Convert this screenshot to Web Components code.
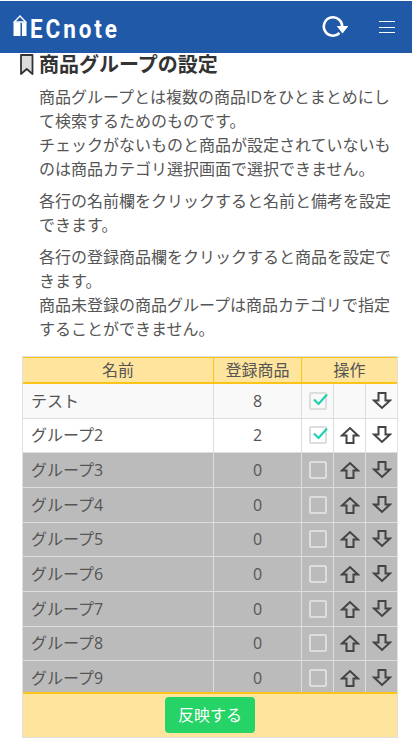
<!DOCTYPE html>
<html lang="ja">
<head>
<meta charset="utf-8">
<title>商品グループの設定</title>
<style>
  html, body { margin: 0; height: 738px; overflow: hidden; background: #fff; }
  body { font-family: "Open Sans", "Noto Sans CJK JP", sans-serif; color: #444; }
</style>
</head>
<body>
<ec-header></ec-header>
<ec-title>商品グループの設定</ec-title>
<ec-intro>
  <p>商品グループとは複数の商品IDをひとまとめにして検索するためのものです。<br>チェックがないものと商品が設定されていないものは商品カテゴリ選択画面で選択できません。</p>
  <p>各行の名前欄をクリックすると名前と備考を設定できます。</p>
  <p>各行の登録商品欄をクリックすると商品を設定できます。<br>商品未登録の商品グループは商品カテゴリで指定することができません。</p>
</ec-intro>
<ec-group-table>
  <ec-group-row name="テスト" count="8" checked first alt></ec-group-row>
  <ec-group-row name="グループ2" count="2" checked></ec-group-row>
  <ec-group-row name="グループ3" count="0" off></ec-group-row>
  <ec-group-row name="グループ4" count="0" off></ec-group-row>
  <ec-group-row name="グループ5" count="0" off></ec-group-row>
  <ec-group-row name="グループ6" count="0" off></ec-group-row>
  <ec-group-row name="グループ7" count="0" off></ec-group-row>
  <ec-group-row name="グループ8" count="0" off></ec-group-row>
  <ec-group-row name="グループ9" count="0" off></ec-group-row>
</ec-group-table>
<script>
// page header with logo, reload and menu
class EcHeader extends HTMLElement {
  constructor() {
    super();
    this.attachShadow({ mode: "open" }).innerHTML = `
      <style>
        :host{display:flex;align-items:center;height:52px;margin-top:1px;background:#2059a8;color:#fff;box-sizing:border-box;padding:0 17px 0 13px;}
        .pencil{width:14px;height:23px;margin-top:-1px;}
        .logo{font:700 25px/1 "Roboto",sans-serif;letter-spacing:3.200px;margin:4px 0 0 3px;transform:scaleX(.9);transform-origin:left center;}
        .gap{flex:1;}
        .reload{width:26px;height:26px;margin-right:31px;margin-top:-2px;}
        .menu{width:16px;height:12px;display:flex;flex-direction:column;justify-content:space-between;}
        .menu i{display:block;height:1px;background:#fff;}
      </style>
      <svg class="pencil" viewBox="0 0 14 23"><path d="M7 1 12.800 7H1.200Z" fill="none" stroke="#fff" stroke-width="1.400"/><path d="M.5 7.500H7.500V21H.5ZM9 7.500H13.500V21H9Z" fill="#fff"/></svg>
      <div class="logo">ECnote</div>
      <div class="gap"></div>
      <svg class="reload" viewBox="0 0 26 26"><path d="M20.200 14A9.200 9.200 0 1 0 17.500 20" fill="none" stroke="#fff" stroke-width="2.600"/><path d="M14.700 13H26.300L20.500 20.500Z" fill="#fff"/></svg>
      <div class="menu"><i></i><i></i><i></i></div>`;
  }
}
customElements.define("ec-header", EcHeader);

// section heading with bookmark
class EcTitle extends HTMLElement {
  constructor() {
    super();
    this.attachShadow({ mode: "open" }).innerHTML = `
      <style>
        :host{display:flex;align-items:center;gap:4px;height:24px;padding-left:20px;font-size:20px;font-weight:700;color:#333;line-height:24px;}
        svg{width:15px;height:22px;flex:none;}
      </style>
      <svg viewBox="0 0 15 22"><path d="M1 1h11.500v19l-5.750-5-5.750 5Z" fill="#dcdcdc" stroke="#333" stroke-width="1.800" stroke-linejoin="round"/></svg>
      <slot></slot>`;
  }
}
customElements.define("ec-title", EcTitle);

// explanatory paragraphs
class EcIntro extends HTMLElement {
  constructor() {
    super();
    this.attachShadow({ mode: "open" }).innerHTML = `
      <style>
        :host{display:block;padding:8px 20px 0 39px;font-size:16px;line-height:24px;color:#555;height:279px;box-sizing:border-box;}
        ::slotted(p){margin:0 0 8px;}
      </style>
      <slot></slot>`;
  }
}
customElements.define("ec-intro", EcIntro);

// table shell: head, rows, footer with the submit button
class EcGroupTable extends HTMLElement {
  constructor() {
    super();
    this.attachShadow({ mode: "open" }).innerHTML = `
      <style>
        :host{display:block;margin-left:22px;width:376px;box-sizing:border-box;border:1px solid #e0e0e0;font-size:16px;color:#555;}
        .head{display:grid;grid-template-columns:190px 1px 87px 1px 95px;height:27px;box-sizing:border-box;background:#fee49c;border-top:1px solid #fcc419;border-bottom:2px solid #fcc419;line-height:24px;text-align:center;}
        .head b{font-weight:400;}
        .head i{background:#fcc419;}
        .rows{height:308px;overflow:hidden;border-bottom:2px solid #fcc419;}
        .foot{height:43px;background:#fee49c;display:flex;justify-content:center;padding-top:3px;box-sizing:border-box;}
        button{all:unset;width:90px;height:36px;border-radius:4px;background:#26d366;color:#fff;text-align:center;font:400 16px/36px "Open Sans","Noto Sans CJK JP",sans-serif;}
      </style>
      <div class="head"><b>名前</b><i></i><b>登録商品</b><i></i><b>操作</b></div>
      <div class="rows"><slot></slot></div>
      <div class="foot"><button>反映する</button></div>`;
  }
}
customElements.define("ec-group-table", EcGroupTable);

const ARROW_DOWN = `<svg viewBox="0 0 20 20"><path d="M6.500 2h7v7.500h4.500L10 17 2 9.500h4.500Z" fill="none" stroke="#444" stroke-width="2"/></svg>`;
const ARROW_UP = `<svg viewBox="0 0 20 20"><path d="M6.500 18h7v-7.500h4.500L10 3 2 10.500h4.500Z" fill="none" stroke="#444" stroke-width="2"/></svg>`;

// one group row
class EcGroupRow extends HTMLElement {
  connectedCallback() {
    const off = this.hasAttribute("off");
    const checked = this.hasAttribute("checked");
    const first = this.hasAttribute("first");
    const bg = off ? "#bbb" : this.hasAttribute("alt") ? "#f9f9f9" : "#fff";
    const root = this.shadowRoot || this.attachShadow({ mode: "open" });
    root.innerHTML = `
      <style>
        :host{display:grid;grid-template-columns:191px 88px 32px 32px 31px;height:34.667px;box-sizing:border-box;background:${bg};border-bottom:1px solid #ddd;line-height:32px;color:#555;}
        div{display:flex;align-items:center;justify-content:center;border-right:1px solid #ddd;box-sizing:border-box;min-width:0;}
        div:last-child{border-right:0;}
        .name{justify-content:flex-start;padding-left:8px;}
        .box{width:18px;height:18px;box-sizing:border-box;border:2px solid #ddd;border-radius:2px;position:relative;}
        .box svg{position:absolute;left:1px;top:-3px;width:17px;height:17px;}
        .arrow svg{width:20px;height:20px;}
      </style>
      <div class="name">${this.getAttribute("name")}</div>
      <div>${this.getAttribute("count")}</div>
      <div><span class="box">${checked ? `<svg viewBox="0 0 17 17"><path d="M2 8.500 6.500 13 15 3.500" fill="none" stroke="#1fd1ae" stroke-width="2.200"/></svg>` : ""}</span></div>
      <div class="arrow">${first ? "" : ARROW_UP}</div>
      <div class="arrow">${ARROW_DOWN}</div>`;
  }
}
customElements.define("ec-group-row", EcGroupRow);
</script>
</body>
</html>
